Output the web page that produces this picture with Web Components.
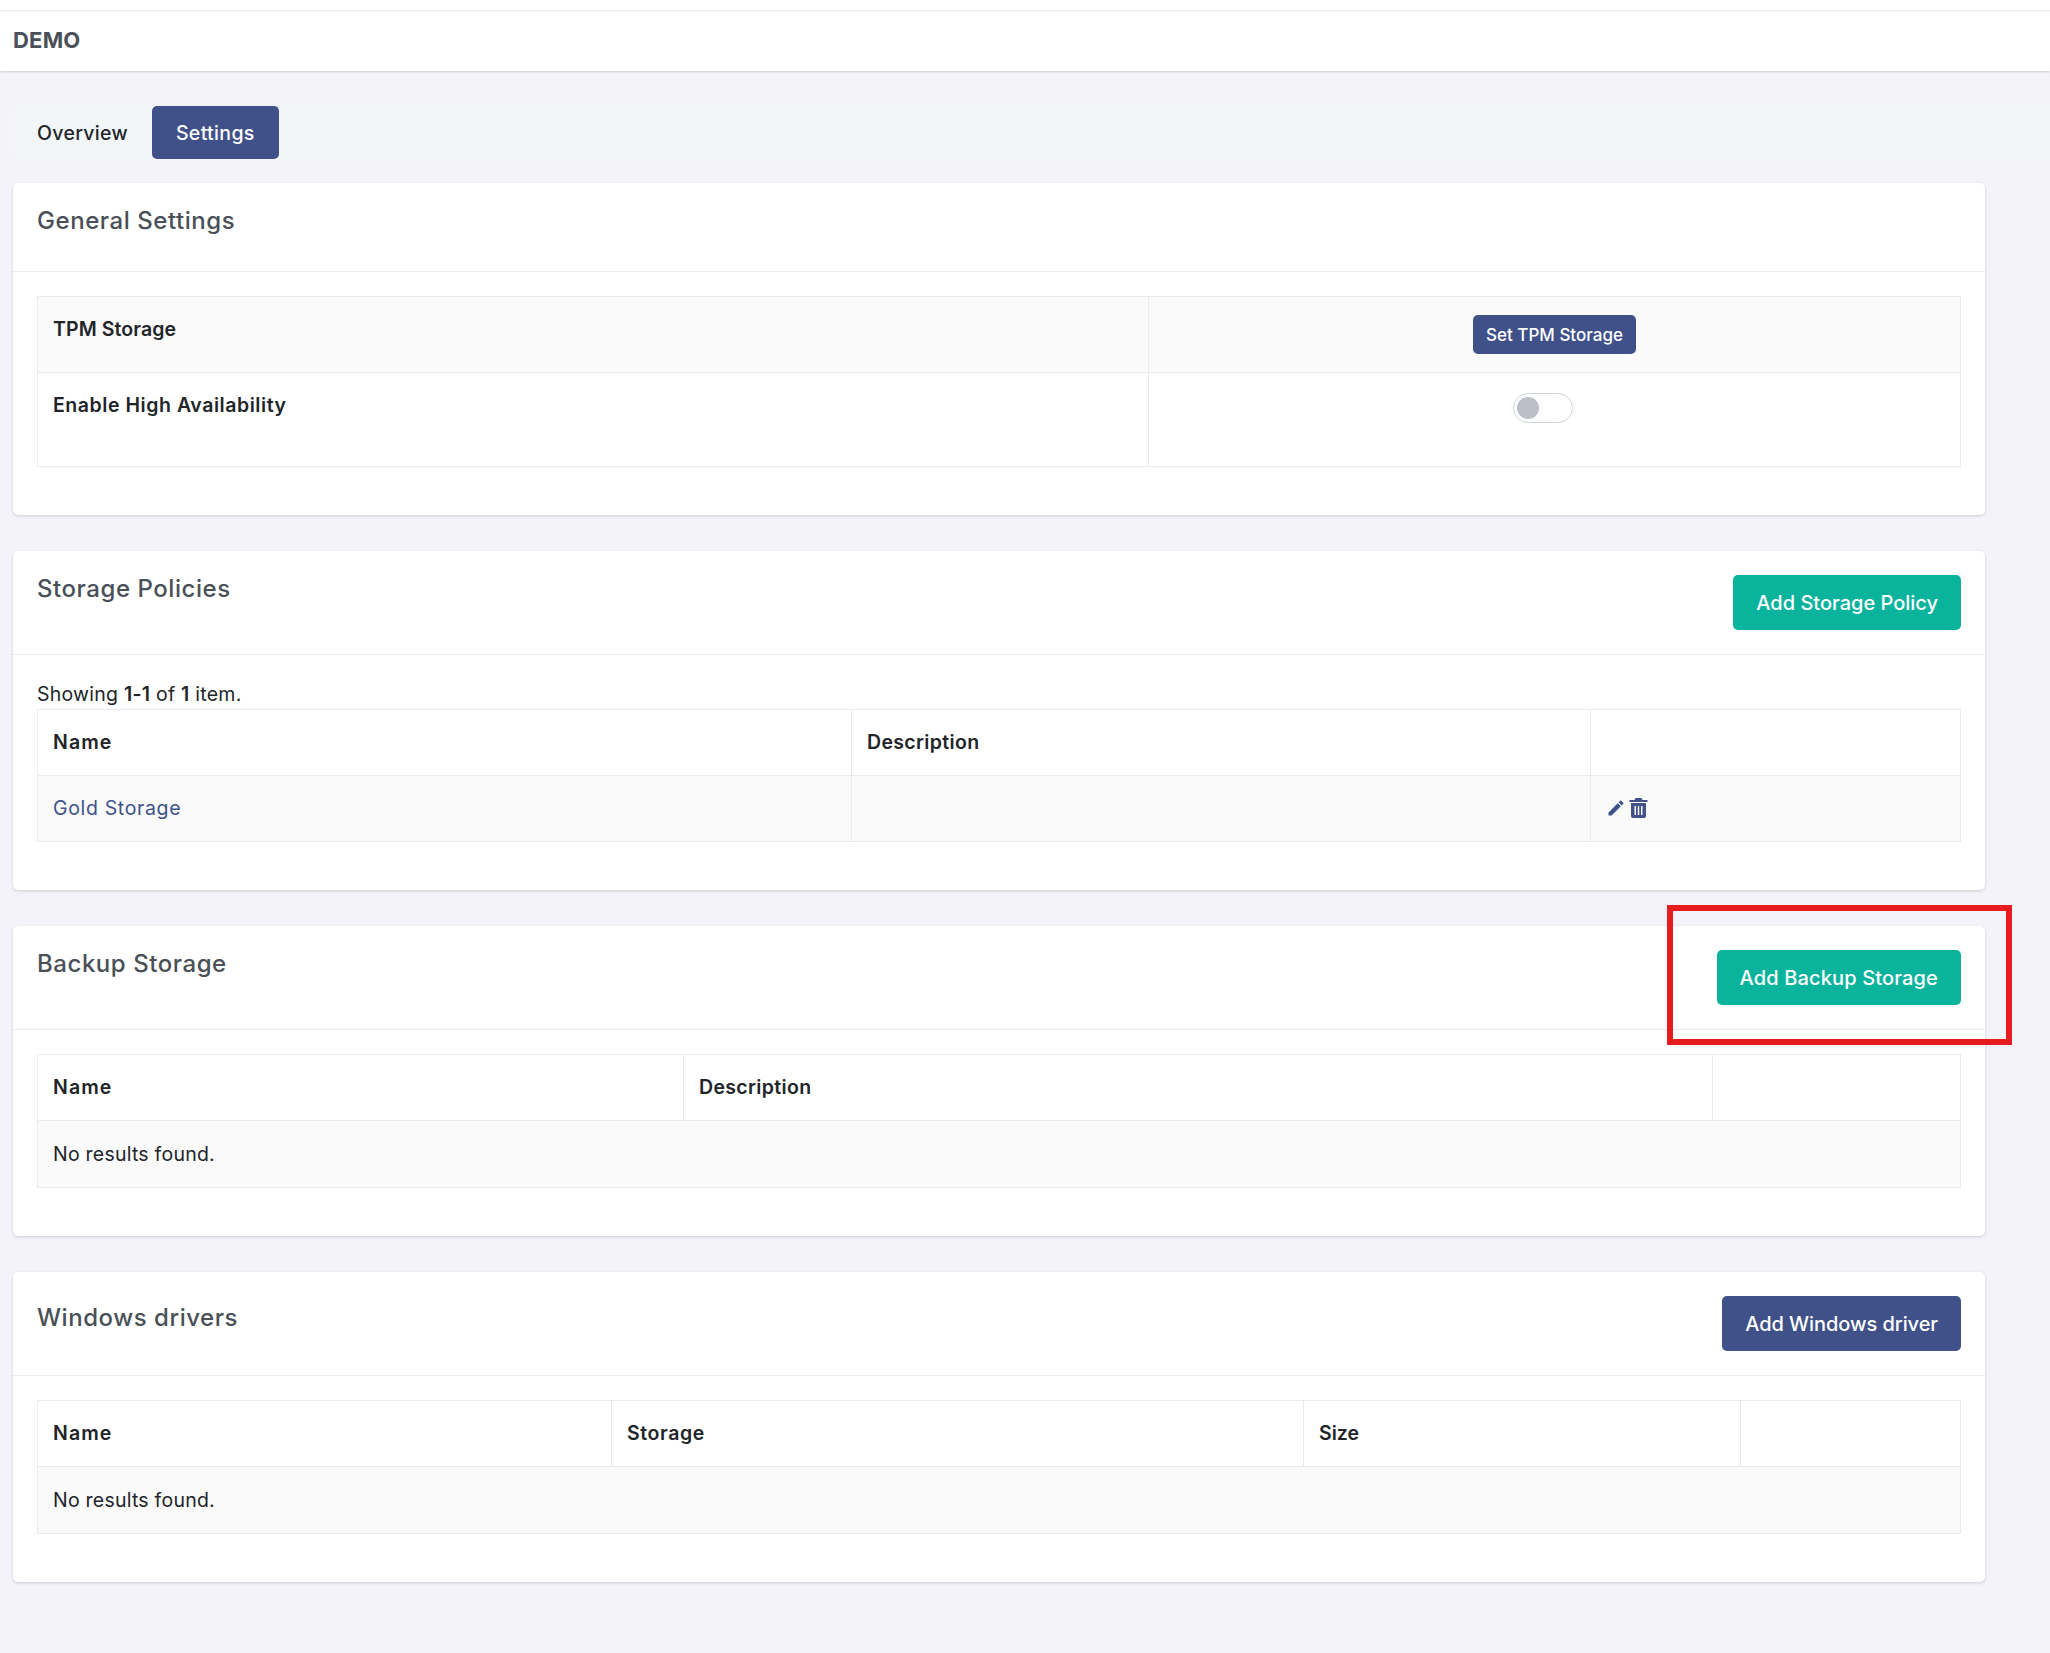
<!DOCTYPE html>
<html>
<head>
<meta charset="utf-8">
<title>Demo settings</title>
<style>
  html, body { margin: 0; padding: 0; background: #f3f3f9; }
  body { font-family: Inter, "Liberation Sans", sans-serif; font-size: 19px; color: #212529; min-height: 1653px; position: relative; }
</style>
</head>
<body>

<app-header>DEMO</app-header>

<tab-bar>
  <tab-link>Overview</tab-link>
  <tab-link active>Settings</tab-link>
</tab-bar>

<card-list>
  <settings-card heading="General Settings">
    <data-table style="--cols: 1110px 1fr">
      <table-row striped tall="75">
        <table-cell strong style="letter-spacing:.1px">TPM Storage</table-cell>
        <table-cell center><ui-button small>Set TPM Storage</ui-button></table-cell>
      </table-row>
      <table-row tall="94">
        <table-cell strong style="letter-spacing:.55px">Enable High Availability</table-cell>
        <table-cell center><toggle-switch></toggle-switch></table-cell>
      </table-row>
    </data-table>
  </settings-card>

  <settings-card heading="Storage Policies">
    <ui-button slot="action" kind="green">Add Storage Policy</ui-button>
    <summary-line>Showing <b>1-1</b> of <b>1</b> item.</summary-line>
    <data-table style="--cols: 813px 739px 1fr">
      <table-row>
        <table-cell strong style="letter-spacing:1.1px">Name</table-cell>
        <table-cell strong>Description</table-cell>
        <table-cell></table-cell>
      </table-row>
      <table-row striped>
        <table-cell link>Gold Storage</table-cell>
        <table-cell></table-cell>
        <table-cell><row-actions></row-actions></table-cell>
      </table-row>
    </data-table>
  </settings-card>

  <settings-card heading="Backup Storage">
    <ui-button slot="action" kind="green" style="letter-spacing:.15px">Add Backup Storage</ui-button>
    <data-table style="--cols: 645px 1029px 1fr">
      <table-row>
        <table-cell strong style="letter-spacing:1.1px">Name</table-cell>
        <table-cell strong>Description</table-cell>
        <table-cell></table-cell>
      </table-row>
      <table-row striped>
        <table-cell wide>No results found.</table-cell>
      </table-row>
    </data-table>
  </settings-card>

  <settings-card heading="Windows drivers" style="--title-top: 7px">
    <ui-button slot="action" style="letter-spacing:-.07px">Add Windows driver</ui-button>
    <data-table style="--cols: 573px 692px 437px 1fr">
      <table-row>
        <table-cell strong style="letter-spacing:1.1px">Name</table-cell>
        <table-cell strong style="letter-spacing:.6px">Storage</table-cell>
        <table-cell strong style="letter-spacing:0">Size</table-cell>
        <table-cell></table-cell>
      </table-row>
      <table-row striped>
        <table-cell wide>No results found.</table-cell>
      </table-row>
    </data-table>
  </settings-card>
</card-list>

<red-callout></red-callout>

<script>
function component(name, css, html, extra) {
  class C extends HTMLElement {
    constructor() {
      super();
      this.attachShadow({ mode: 'open' });
      this.shadowRoot.innerHTML = `<style>${css}</style>${html}`;
    }
    connectedCallback() { if (extra) extra.call(this); }
  }
  customElements.define(name, C);
}

component('app-header', `
  :host { display: block; padding-top: 10px; background: #fff;
    box-shadow: 0 1px 2px rgba(56,65,74,.2); font-weight: 700; font-size: 22px; letter-spacing: .2px; color: #495057; }
  div { box-sizing: border-box; height: 61px; padding: 0 13px 3px; display: flex; align-items: center; border-top: 1px solid #e9ebec; }
`, `<div><slot></slot></div>`);

component('tab-bar', `
  :host { display: flex; margin: 35px 0 24px 13px; height: 53px; background: #f3f6f9; }
`, `<slot></slot>`);

component('tab-link', `
  :host { display: flex; align-items: center; padding: 0 24px; border-radius: 5px; font-weight: 500; font-size: 19.5px; letter-spacing: .3px; color: #212529; }
  :host([active]) { background: #405189; color: #fff; letter-spacing: .35px; }
`, `<slot></slot>`);

component('card-list', `
  :host { display: flex; flex-direction: column; gap: 36px; width: 1972px; margin-left: 13px; }
`, `<slot></slot>`);

component('settings-card', `
  :host { display: block; background: #fff; border-radius: 5px; box-shadow: 0 1px 3px rgba(56,65,74,.2); }
  header { display: flex; justify-content: space-between; align-items: flex-start; min-height: 40px;
    padding: 24px; border-bottom: 1px solid #e9ebec; }
  h2 { margin: var(--title-top, -1px) 0 0; font-size: 24px; font-weight: 500; line-height: 30px; letter-spacing: .55px; color: #495057; }
  section { padding: 24px 24px 48px; }
`, `<header><h2></h2><slot name="action"></slot></header><section><slot></slot></section>`,
function () { this.shadowRoot.querySelector('h2').textContent = this.getAttribute('heading'); });

component('summary-line', `
  :host { display: block; height: 30px; line-height: 30px; font-size: 19.5px; letter-spacing: .24px; color: #212529; }
  ::slotted(b) { font-weight: 600; }
`, `<slot></slot>`);

component('data-table', `
  :host { display: block; border: 1px solid #e9ebec; border-bottom: 0; }
`, `<slot></slot>`);

component('table-row', `
  :host { display: grid; grid-template-columns: var(--cols); min-height: 65px; border-bottom: 1px solid #e9ebec; }
  :host([striped]) { background: #fafafa; }
  :host([tall="75"]) { min-height: 75px; }
  :host([tall="94"]) { min-height: 93px; }
`, `<slot></slot>`);

component('table-cell', `
  :host { display: block; box-sizing: border-box; padding: 17px 15px; line-height: 30px; font-size: 19.5px; letter-spacing: .23px; border-left: 1px solid #e9ebec; min-width: 0; }
  :host(:first-child) { border-left: 0; }
  :host([strong]) { font-weight: 600; letter-spacing: .35px; color: #212529; }
  :host([link]) { color: #405189; letter-spacing: .65px; }
  :host([center]) { text-align: center; }
  :host([wide]) { grid-column: 1 / -1; padding: 18px 15px; }
`, `<slot></slot>`);

component('ui-button', `
  :host { display: inline-flex; align-items: center; justify-content: center; box-sizing: border-box;
    height: 55px; padding: 0 23px; border-radius: 5px; background: #405189; color: #fff; font-weight: 500; font-size: 20px; letter-spacing: 0; white-space: nowrap; }
  :host([kind="green"]) { background: #0ab39c; }
  :host([small]) { height: 39px; margin-top: 1px; padding: 0 13px; font-size: 17px; vertical-align: top; }
`, `<slot></slot>`);

component('toggle-switch', `
  :host { display: inline-block; box-sizing: border-box; width: 60px; height: 30px; margin: 3px 24px 0 0; vertical-align: top;
    padding: 3px; border: 1px solid #ced4da; border-radius: 15px; background: #fff; }
  i { display: block; width: 22px; height: 22px; border-radius: 50%; background: #bcbfc8; }
`, `<i></i>`);

component('row-actions', `
  :host { display: flex; align-items: center; height: 30px; gap: 3px; color: #405189; }
  svg { display: block; fill: currentColor; }
`, `
  <svg width="20" height="20" viewBox="0 0 24 24"><path d="M3 17.25V21h3.75L17.81 9.94l-3.75-3.75L3 17.25zM20.71 7.04a1 1 0 0 0 0-1.41l-2.34-2.34a1 1 0 0 0-1.41 0l-1.83 1.83 3.75 3.75 1.83-1.83z"/></svg>
  <svg width="19" height="22" viewBox="0 0 19 22"><path fill-rule="evenodd" d="M6.500 1h6l1 2h5v2H.5V3h5l1-2zM2 6h15v13a2 2 0 0 1-2 2H4a2 2 0 0 1-2-2V6zM5.500 9v9H7V9H5.500zm3.250 0v9h1.500V9h-1.500zM12 9v9h1.500V9H12z"/></svg>
`);

// the annotation drawn over the screenshot
component('red-callout', `
  :host { position: absolute; left: 1667px; top: 905px; width: 345px; height: 140px; box-sizing: border-box; border: 6px solid #e81c1f; }
`, ``);
</script>
</body>
</html>
